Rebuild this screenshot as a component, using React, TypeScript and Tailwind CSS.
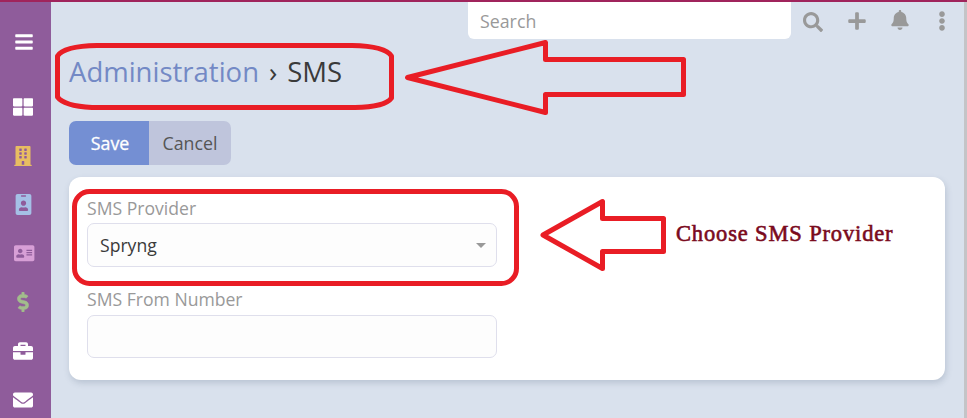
import React from "react";
import {
  FaBars, FaThLarge, FaBuilding, FaIdBadge, FaAddressCard, FaDollarSign,
  FaBriefcase, FaEnvelope, FaSearch, FaPlus, FaBell, FaEllipsisV,
} from "react-icons/fa";

const items = [
  { Icon: FaThLarge, color: "text-white", size: 20 },
  { Icon: FaBuilding, color: "text-[#e8bd62]", size: 20 },
  { Icon: FaIdBadge, color: "text-[#a5c0e6]", size: 21 },
  { Icon: FaAddressCard, color: "text-[#d79fd6]", size: 20.4 },
  { Icon: FaDollarSign, color: "text-[#a2bd8c] [&_path]:stroke-current [&_path]:[stroke-width:12px]", size: 20 },
  { Icon: FaBriefcase, color: "text-white", size: 20 },
  { Icon: FaEnvelope, color: "text-white", size: 20 },
];

function Sidebar() {
  return (
    <nav className="flex w-[51px] shrink-0 flex-col bg-[#8f5c9b] pr-[5px]">
      <button className="flex h-[80.5px] shrink-0 items-center justify-center text-white">
        <FaBars size={20} className="ml-[2px]" />
      </button>
      {items.map(({ Icon, color, size }, i) => (
        <a key={i} className={`flex h-[48.8px] shrink-0 items-center justify-center ${color}`}>
          <Icon size={size} className={i === 3 ? "ml-[3px]" : ""} />
        </a>
      ))}
    </nav>
  );
}

function Annotations() {
  return (
    <svg
      className="pointer-events-none absolute inset-0"
      width="967"
      height="418"
      fill="none"
      stroke="#e91d25"
      strokeWidth="5"
      strokeLinejoin="round"
    >
      <path d="M97 45.5H352Q385 46 391.500 56V98Q385 107 355 107.500H92Q64 106 57.500 97V56Q64 46 97 45.500Z" />
      <path d="M407.500 77.500L545.500 42.500V59.500H683.500V94.500H545.500V112.500Z" />
      <rect x="74.500" y="191.500" width="442" height="92" rx="15" />
      <path d="M543 235L602.500 201.500V218.500H663.500V251.500H602.500V268.500Z" />
    </svg>
  );
}

export default function App() {
  return (
    <div className="relative flex h-[418px] w-[967px] flex-col overflow-hidden bg-[#d9e1ed] font-['Open_Sans',sans-serif]">
      <div className="h-[2px] shrink-0 bg-[#a0245c]" />
      <div className="flex min-h-0 flex-1">
        <Sidebar />
        <main className="flex min-w-0 flex-1 flex-col pl-[18px]">
          <header className="flex h-[37px] shrink-0 text-[#999]">
            <div className="ml-[399px] flex w-[323px] items-center rounded-b-[6px] bg-white pl-[12px] pt-px text-[17.8px]">Search</div>
            <FaSearch size={20} className="mt-[10px] ml-[12px]" />
            <FaPlus size={20} className="mt-[9px] ml-[24px]" />
            <FaBell size={20} className="mt-[8px] ml-[23px]" />
            <FaEllipsisV size={20} className="mt-[9px] ml-[22px]" />
          </header>
          <h1 className="mt-[14px] flex h-[38px] shrink-0 items-center text-[27.5px] leading-[38px] text-[#3a3a3a]">
            <span className="text-[#7389c5]">Administration</span>
            <span className="mx-[10px]">›</span>
            <span>SMS</span>
          </h1>
          <div className="mt-[30px] flex h-[44px] w-[162px] shrink-0 overflow-hidden rounded-[7px] text-[17.8px]">
            <button className="w-[80px] bg-[#748fd3] pl-[2px] text-white [-webkit-text-stroke:0.3px_white]">Save</button>
            <button className="flex-1 bg-[#bfc5dc] text-[#555]">Cancel</button>
          </div>
          <section className="mt-[12px] flex h-[203px] w-[876px] shrink-0 flex-col rounded-[12px] bg-white px-[18px] pt-[18px] text-[17.6px] shadow-[1px_3px_6px_rgba(75,90,120,0.22)]">
            <label className="h-[28px] leading-[26px] text-[#999]">SMS Provider</label>
            <div className="flex h-[44px] w-[410px] items-center justify-between rounded-[7px] border border-[#dfdfec] bg-[#fdfdfd] pl-[12px] pr-[10px] text-[#3a3a3a]">
              Spryng
              <svg width="10" height="5" viewBox="0 0 10 5" fill="#999"><path d="M0 0H10L5 5Z" /></svg>
            </div>
            <label className="mt-[19px] h-[29px] leading-[26px] text-[#999]">SMS From Number</label>
            <div className="h-[43px] w-[410px] rounded-[7px] border border-[#dfdfec] bg-[#fdfdfd]" />
          </section>
        </main>
        <div className="w-[3px] shrink-0 bg-[#c4c4c7]" />
      </div>
      <Annotations />
      <p className="absolute left-[676px] top-[220px] whitespace-nowrap font-['Liberation_Serif',serif] text-[22.5px] tracking-[0.85px] leading-[28px] text-[#7a0a1d] [-webkit-text-stroke:0.6px_#7a0a1d]">Choose SMS Provider</p>
    </div>
  );
}
